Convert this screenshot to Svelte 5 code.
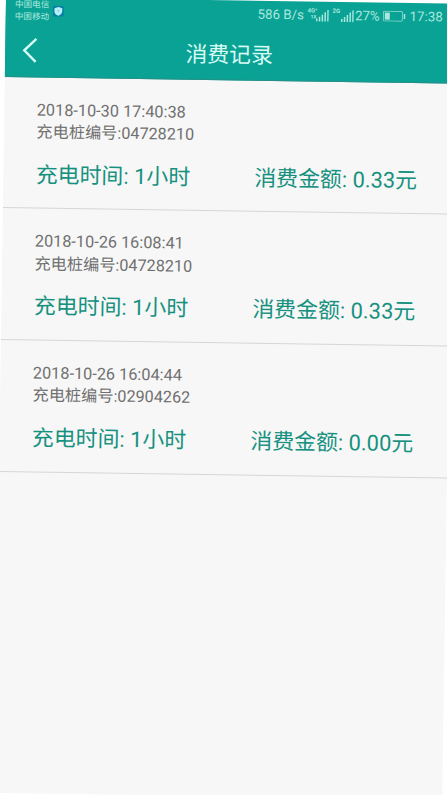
<script lang="ts">
	type RecordItem = { time: string; pile: string; duration: string; amount: string };

	const records: RecordItem[] = [
		{ time: '2018-10-30 17:40:38', pile: '04728210', duration: '1小时', amount: '0.33元' },
		{ time: '2018-10-26 16:08:41', pile: '04728210', duration: '1小时', amount: '0.33元' },
		{ time: '2018-10-26 16:04:44', pile: '02904262', duration: '1小时', amount: '0.00元' },
	];
</script>

{#snippet bars()}
	<svg class="bars" width="13" height="12" viewBox="0 0 13 12">
		<path d="M1 9v3M3.8 7v5M6.6 5v7M9.4 2.5V12M12.2 0v12" stroke="currentColor" stroke-width="1.5" />
	</svg>
{/snippet}

<div class="viewport">
	<div class="screen">
		<header>
			<div class="status">
				<div class="carriers">
					<span>中国电信</span>
					<span>中国移动</span>
				</div>
				<svg class="shield" width="11" height="11" viewBox="0 0 11 11">
					<rect width="11" height="11" rx="2" fill="#087fa5" />
					<path d="M5.5 1.2 9.4 2.5v3.2c0 2-1.7 3.3-3.9 4.2-2.2-.9-3.9-2.2-3.9-4.2V2.5z" fill="#b5f0f5" />
					<path d="M5.5 3.8v2.6M4.2 5.1h2.6" stroke="#7fd3df" stroke-width=".7" />
				</svg>
				<div class="indicators">
					<span class="speed">586 B/s</span>
					<span class="net"><i>4G⁺</i><i class="sub">1X</i></span>
					{@render bars()}
					<span class="net"><i>2G</i></span>
					{@render bars()}
					<span class="percent">27%</span>
					<svg class="battery" width="23" height="11" viewBox="0 0 23 11">
						<rect x=".6" y=".6" width="19" height="9.8" rx="1" fill="none" stroke="currentColor" stroke-width="1" opacity=".7" />
						<rect x="2" y="2" width="5" height="7" fill="currentColor" />
						<path d="M21.7 3v5" stroke="currentColor" stroke-width="1.5" />
					</svg>
					<span class="clock">17:38</span>
				</div>
			</div>
			<nav>
				<svg class="back" width="16" height="26" viewBox="0 0 16 26">
					<path d="M14 1.5 2 13l11.5 11.5" fill="none" stroke="currentColor" stroke-width="2.4" />
				</svg>
				<h1>消费记录</h1>
			</nav>
		</header>

		<ul>
			{#each records as r}
				<li>
					<div class="meta">{r.time}</div>
					<div class="meta pile">充电桩编号:{r.pile}</div>
					<div class="values">
						<span>充电时间: {r.duration}</span>
						<span>消费金额: {r.amount}</span>
					</div>
				</li>
			{/each}
		</ul>
	</div>
</div>

<style>
	.viewport {
		width: 447px;
		height: 795px;
		overflow: hidden;
		background: #fff;
		font-family: Roboto, "Noto Sans CJK SC", sans-serif;
	}

	.screen {
		width: 448px;
		height: 793px;
		margin-left: 6px;
		background: #f7f7f7;
		transform: rotate(0.85deg);
		transform-origin: 0 0;
		white-space: nowrap;
	}

	header {
		height: 76.5px;
		box-sizing: border-box;
		background: #0aa294;
		color: #d8fbf4;
		border-bottom: 1px solid #278f88;
		/* keeps the bar flush with the top edge */
		box-shadow: 0 -3px 0 #0aa294;
	}

	.status {
		display: flex;
		height: 22px;
		color: #a9e8de;
	}

	.carriers {
		display: flex;
		flex-direction: column;
		margin-left: 9px;
		margin-top: -2px;
		font-size: 8.6px;
		line-height: 12px;
	}

	.shield {
		margin: 5px 0 0 3.5px;
	}

	.indicators {
		display: flex;
		align-items: center;
		height: 21px;
		margin: 0 11px 0 auto;
		font-size: 13.3px;
	}

	.net {
		display: flex;
		flex-direction: column;
		align-self: flex-start;
		width: 8.5px;
		margin: 3px 0 0 3.5px;
		font-size: 6px;
		font-weight: 700;
		line-height: 6px;
	}

	.net i { font-style: normal; }

	.net .sub {
		padding-left: 3px;
		font-size: 5px;
	}

	.percent { margin-left: 1px; }

	.battery { margin: 0 4px 0 3px; }

	nav {
		display: grid;
		grid-template-columns: 60px 1fr 60px;
		align-items: center;
		height: 54px;
	}

	.back { margin: 1px 0 0 17px; }

	h1 {
		margin: 0;
		font-size: 21.8px;
		font-weight: 400;
		text-align: center;
	}

	ul {
		margin: 0;
		padding: 0;
		list-style: none;
	}

	li {
		height: 131.7px;
		box-sizing: border-box;
		padding: 22px 0 0 32.4px;
		border-bottom: 1.4px solid #d6d6d6;
	}

	.meta {
		height: 22.5px;
		font-size: 16.3px;
		line-height: 22px;
		color: #707070;
	}

	.pile { font-size: 16.2px; }

	.values {
		display: grid;
		grid-template-columns: 218.5px 1fr;
		margin-top: 16px;
		font-size: 21.9px;
		line-height: 30px;
		color: #16917f;
	}
</style>
